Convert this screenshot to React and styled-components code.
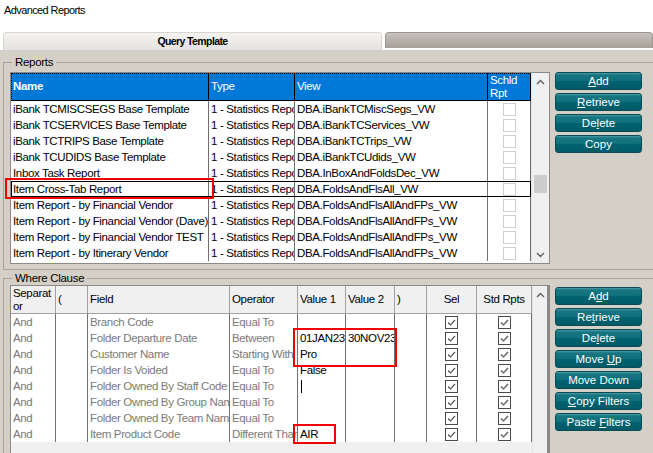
import React from "react";
import styled, { createGlobalStyle } from "styled-components";

const GlobalStyle = createGlobalStyle`
  html, body {
    margin: 0;
    padding: 0;
    background: #fff;
    overflow: hidden;
  }
`;

const UI = `"Liberation Sans", Arial, sans-serif`;

const Window = styled.div`
  position: relative;
  width: 653px;
  height: 453px;
  overflow: hidden;
  background: #fff;
  font-family: ${UI};
  display: flex;
  flex-direction: column;
`;

const TitleBar = styled.div`
  height: 32px;
  box-sizing: border-box;
  padding: 3px 0 0 4px;
  font-size: 11px;
  letter-spacing: -0.6px;
  line-height: 14px;
  color: #000;
`;

const TabStrip = styled.div`
  display: flex;
  align-items: flex-start;
  gap: 3px;
  height: 18px;
  padding-left: 3px;
`;

const Tab = styled.div`
  box-sizing: border-box;
  flex: ${(p) => (p.$active ? "0 0 379px" : "1")};
  height: ${(p) => (p.$active ? "18px" : "16px")};
  border: 1px solid ${(p) => (p.$active ? "#d9d6d1" : "#9d988f")};
  border-bottom: none;
  border-radius: 4px 4px 0 0;
  background: ${(p) =>
    p.$active
      ? "linear-gradient(#f4f3f1, #e5e3df)"
      : "linear-gradient(#c6c2bc, #a5a098)"};
  font-weight: bold;
  font-size: 10.5px;
  letter-spacing: -0.6px;
  line-height: 17px;
  text-align: center;
`;

const Panel = styled.div`
  flex: 1;
  display: flex;
  flex-direction: column;
  padding: 5px 0 0 3px;
  background: #d4d0c8;
  overflow: hidden;
`;

const GroupBox = styled.fieldset`
  margin: ${(p) => (p.$first ? "0" : "1px 0 0 0")};
  padding: ${(p) => (p.$first ? "3px 0 5px 6px" : "0 0 0 6px")};
  border: 1px solid #a6a29c;
  border-right: none;
  min-width: 0;
  flex: ${(p) => (p.$first ? "none" : "1")};
`;

const Legend = styled.legend`
  margin-left: 2px;
  padding: 0 3px;
  font-size: 11.5px;
  letter-spacing: -0.3px;
  line-height: 14px;
  color: #000;
`;

const GroupBody = styled.div`
  display: flex;
  align-items: flex-start;
  gap: 5px;
`;

const GridFrame = styled.div`
  box-sizing: border-box;
  width: 540px;
  height: ${(p) => p.$height}px;
  display: flex;
  border: 1px solid #8c8a86;
  background: ${(p) => p.$fill};
`;

const Table = styled.div`
  display: flex;
  flex-direction: column;
  width: ${(p) => p.$width}px;
  font-size: 11.5px;
  letter-spacing: -0.35px;
`;

const HeaderRow = styled.div`
  display: grid;
  grid-template-columns: ${(p) => p.$cols};
  height: 28px;
  background: ${(p) => (p.$blue ? "#0078d7" : "#f0f0f0")};
  color: ${(p) => (p.$blue ? "#fff" : "#000")};
  outline: ${(p) => (p.$blue ? "1px dotted #000" : "none")};
  outline-offset: -1px;
`;

const HeaderCell = styled.div`
  box-sizing: border-box;
  display: flex;
  align-items: ${(p) => (p.$wrap ? "flex-start" : "center")};
  justify-content: ${(p) => (p.$center ? "center" : "flex-start")};
  padding: ${(p) => (p.$wrap ? "1px 2px 0" : "0 2px")};
  border-right: 1px solid ${(p) => p.$line};
  border-bottom: 1px solid ${(p) => p.$line};
  font-weight: ${(p) => (p.$bold ? "bold" : "normal")};
  line-height: 13px;
  overflow: hidden;
  word-break: ${(p) => (p.$breakAll ? "break-all" : "normal")};
`;

const Row = styled.div`
  display: grid;
  grid-template-columns: ${(p) => p.$cols};
  height: 16px;
  background: #fff;
  outline: ${(p) => (p.$focused ? "1px solid #000" : "none")};
  outline-offset: -1px;
`;

const Cell = styled.div`
  box-sizing: border-box;
  display: flex;
  align-items: center;
  justify-content: ${(p) => (p.$center ? "center" : "flex-start")};
  padding: 0 2px;
  border-right: 1px solid #707070;
  color: ${(p) => (p.$muted ? "#7a7a7a" : "#000")};
  white-space: nowrap;
  overflow: hidden;
  line-height: 16px;
`;

const Caret = styled.span`
  display: inline-block;
  width: 1px;
  height: 13px;
  background: #000;
  margin-left: 1px;
`;

const Box = styled.span`
  box-sizing: border-box;
  display: inline-flex;
  width: 13px;
  height: 13px;
  border: 1px solid ${(p) => (p.$checked ? "#4a4a4a" : "#cfcfcf")};
  background: #fff;
`;

const ScrollBar = styled.div`
  box-sizing: border-box;
  width: ${(p) => p.$width}px;
  display: flex;
  flex-direction: column;
  background: #f0f0f0;
  border-left: 1px solid #e2e2e2;
  border-right: ${(p) => (p.$edge ? "2px solid #8d8a85" : "none")};
`;

const ScrollArrow = styled.div`
  height: 17px;
  display: flex;
  align-items: center;
  justify-content: center;
`;

const ScrollTrack = styled.div`
  flex: 1;
  display: flex;
  flex-direction: column;
  padding: 0 2px;
`;

const ScrollThumb = styled.div`
  height: 18px;
  margin-top: ${(p) => p.$offset}px;
  background: #cdcdcd;
`;

const ButtonColumn = styled.div`
  display: flex;
  flex-direction: column;
  gap: 3px;
  padding-top: ${(p) => p.$top}px;
`;

const ActionButton = styled.button`
  box-sizing: border-box;
  width: 87px;
  height: 18px;
  padding: 0;
  border: 1px solid #0a4c56;
  border-radius: 3px;
  background: linear-gradient(
    #4b99a3 0,
    #187682 2px,
    #0f6f7b 48%,
    #006270 52%,
    #005a66 100%
  );
  color: #fff;
  font-family: ${UI};
  font-size: 11.5px;
  line-height: 16px;
  text-align: center;
  cursor: pointer;

  u {
    text-underline-offset: 1px;
  }
`;

const Callout = styled.div`
  position: absolute;
  box-sizing: border-box;
  left: ${(p) => p.$x}px;
  top: ${(p) => p.$y}px;
  width: ${(p) => p.$w}px;
  height: ${(p) => p.$h}px;
  border: 2px solid #f00000;
  pointer-events: none;
`;

const REPORT_COLS = "198px 86px 193px 43px";
const WHERE_COLS = "45px 32px 142px 68px 48px 49px 32px 50px 55px";

const reports = [
  ["iBank TCMISCSEGS Base Template", "DBA.iBankTCMiscSegs_VW"],
  ["iBank TCSERVICES Base Template", "DBA.iBankTCServices_VW"],
  ["iBank TCTRIPS Base Template", "DBA.iBankTCTrips_VW"],
  ["iBank TCUDIDS Base Template", "DBA.iBankTCUdids_VW"],
  ["Inbox Task Report", "DBA.InBoxAndFoldsDec_VW"],
  ["Item Cross-Tab Report", "DBA.FoldsAndFlsAll_VW"],
  ["Item Report - by Financial Vendor", "DBA.FoldsAndFlsAllAndFPs_VW"],
  ["Item Report - by Financial Vendor (Dave)", "DBA.FoldsAndFlsAllAndFPs_VW"],
  ["Item Report - by Financial Vendor TEST", "DBA.FoldsAndFlsAllAndFPs_VW"],
  ["Item Report - by Itinerary Vendor", "DBA.FoldsAndFlsAllAndFPs_VW"],
];

const filters = [
  ["Branch Code", "Equal To", "", ""],
  ["Folder Departure Date", "Between", "01JAN23", "30NOV23"],
  ["Customer Name", "Starting With", "Pro", ""],
  ["Folder Is Voided", "Equal To", "False", ""],
  ["Folder Owned By Staff Code", "Equal To", "|", ""],
  ["Folder Owned By Group Name", "Equal To", "", ""],
  ["Folder Owned By Team Name", "Equal To", "", ""],
  ["Item Product Code", "Different Than", "AIR", ""],
];

function Chevron({ down }) {
  return (
    <svg width="9" height="6" viewBox="0 0 9 6">
      <polyline
        points={down ? "1,1 4.5,4.5 8,1" : "1,5 4.5,1.5 8,5"}
        fill="none"
        stroke="#606060"
        strokeWidth="1.4"
      />
    </svg>
  );
}

function CheckBox({ checked }) {
  return (
    <Box $checked={checked}>
      {checked && (
        <svg width="11" height="11" viewBox="0 0 11 11">
          <polyline
            points="2,5.5 4.5,8 9,3"
            fill="none"
            stroke="#555"
            strokeWidth="1.2"
          />
        </svg>
      )}
    </Box>
  );
}

function Btn({ pre, key_, post }) {
  return (
    <ActionButton>
      {pre}
      {key_ && <u>{key_}</u>}
      {post}
    </ActionButton>
  );
}

export default function App() {
  return (
    <Window>
      <GlobalStyle />
      <TitleBar>Advanced Reports</TitleBar>
      <TabStrip>
        <Tab $active>Query Template</Tab>
        <Tab />
      </TabStrip>
      <Panel>
        <GroupBox $first>
          <Legend>Reports</Legend>
          <GroupBody>
            <GridFrame $height={192} $fill="#fff">
              <Table $width={520}>
                <HeaderRow $cols={REPORT_COLS} $blue>
                  <HeaderCell $line="#000" $bold>Name</HeaderCell>
                  <HeaderCell $line="#000">Type</HeaderCell>
                  <HeaderCell $line="#000">View</HeaderCell>
                  <HeaderCell $line="#000" $wrap>Schld Rpt</HeaderCell>
                </HeaderRow>
                {reports.map(([name, view], i) => (
                  <Row key={name} $cols={REPORT_COLS} $focused={i === 5}>
                    <Cell>{name}</Cell>
                    <Cell>1 - Statistics Report</Cell>
                    <Cell>{view}</Cell>
                    <Cell $center>
                      <CheckBox />
                    </Cell>
                  </Row>
                ))}
              </Table>
              <ScrollBar $width={19}>
                <ScrollArrow>
                  <Chevron />
                </ScrollArrow>
                <ScrollTrack>
                  <ScrollThumb $offset={85} />
                </ScrollTrack>
                <ScrollArrow>
                  <Chevron down />
                </ScrollArrow>
              </ScrollBar>
            </GridFrame>
            <ButtonColumn $top={0}>
              <Btn key_="A" post="dd" />
              <Btn key_="R" post="etrieve" />
              <Btn pre="De" key_="l" post="ete" />
              <Btn pre="Copy" />
            </ButtonColumn>
          </GroupBody>
        </GroupBox>

        <GroupBox>
          <Legend>Where Clause</Legend>
          <GroupBody>
            <GridFrame $height={200} $fill="#f0f0f0">
              <Table $width={521}>
                <HeaderRow $cols={WHERE_COLS}>
                  <HeaderCell $line="#a0a0a0" $wrap $breakAll>Separator</HeaderCell>
                  <HeaderCell $line="#a0a0a0">(</HeaderCell>
                  <HeaderCell $line="#a0a0a0">Field</HeaderCell>
                  <HeaderCell $line="#a0a0a0">Operator</HeaderCell>
                  <HeaderCell $line="#a0a0a0">Value 1</HeaderCell>
                  <HeaderCell $line="#a0a0a0">Value 2</HeaderCell>
                  <HeaderCell $line="#a0a0a0">)</HeaderCell>
                  <HeaderCell $line="#a0a0a0" $center>Sel</HeaderCell>
                  <HeaderCell $line="#a0a0a0" $center>Std Rpts</HeaderCell>
                </HeaderRow>
                {filters.map(([field, op, v1, v2]) => (
                  <Row key={field} $cols={WHERE_COLS}>
                    <Cell $muted>And</Cell>
                    <Cell />
                    <Cell $muted>{field}</Cell>
                    <Cell $muted>{op}</Cell>
                    <Cell>{v1 === "|" ? <Caret /> : v1}</Cell>
                    <Cell>{v2}</Cell>
                    <Cell />
                    <Cell $center>
                      <CheckBox checked />
                    </Cell>
                    <Cell $center>
                      <CheckBox checked />
                    </Cell>
                  </Row>
                ))}
              </Table>
              <ScrollBar $width={19} $edge>
                <ScrollArrow>
                  <Chevron />
                </ScrollArrow>
              </ScrollBar>
            </GridFrame>
            <ButtonColumn $top={2}>
              <Btn pre="A" key_="d" post="d" />
              <Btn pre="Re" key_="t" post="rieve" />
              <Btn pre="De" key_="l" post="ete" />
              <Btn pre="Move " key_="U" post="p" />
              <Btn pre="Move Down" />
              <Btn key_="C" post="opy Filters" />
              <Btn pre="Paste " key_="F" post="ilters" />
            </ButtonColumn>
          </GroupBody>
        </GroupBox>
      </Panel>

      <Callout $x={5} $y={178} $w={209} $h={21} />
      <Callout $x={293} $y={328} $w={104} $h={39} />
      <Callout $x={293} $y={424} $w={43} $h={20} />
    </Window>
  );
}
